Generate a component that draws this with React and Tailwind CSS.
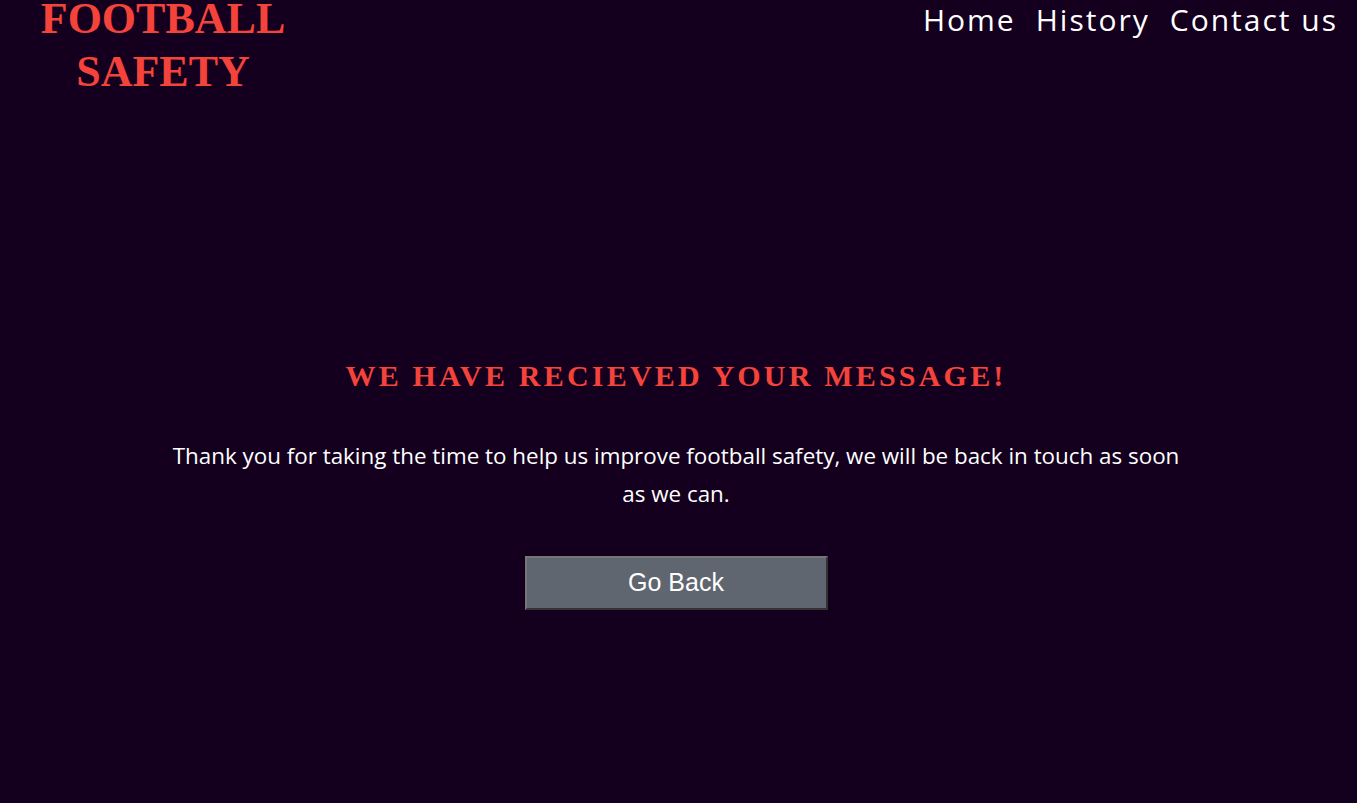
export default function App() {
    const navLinks = ["Home", "History", "Contact us"];

    return (
        <div className="min-h-screen w-full bg-[#14001e] flex flex-col">
            <header className="flex items-start justify-between pl-[40px] pr-[19px]">
                <h1 className="w-[246px] text-center font-['Liberation_Serif',serif] font-bold text-[44px] text-[#f4433b]">
                    <span className="block leading-[38px]">FOOTBALL</span>
                    <span className="block leading-[38px] mt-[15px]">SAFETY</span>
                </h1>
                <nav className="flex gap-[20px]">
                    {navLinks.map((link) => (
                        <a
                            key={link}
                            href="#"
                            className="font-['Open_Sans',sans-serif] text-[30px] leading-[40px] tracking-[2px] text-white"
                        >
                            {link}
                        </a>
                    ))}
                </nav>
            </header>

            <main className="flex flex-col items-center pt-[267px] pr-[5px]">
                <h2 className="font-['Liberation_Serif',serif] font-bold text-[30px] leading-[36px] tracking-[3.2px] text-[#f4433b]">
                    WE HAVE RECIEVED YOUR MESSAGE!
                </h2>
                <p className="mt-[43px] w-[1020px] text-center font-['Open_Sans',sans-serif] text-[22.4px] leading-[38px] text-white">
                    Thank you for taking the time to help us improve football safety, we will be back in touch as soon as we can.
                </p>
                <button
                    type="button"
                    className="mt-[43px] w-[303px] h-[54px] bg-[#5f6670] border-2 border-t-[#767676] border-l-[#767676] border-r-[#333] border-b-[#333] font-['Liberation_Sans',sans-serif] text-[25px] text-white"
                >
                    Go Back
                </button>
            </main>
        </div>
    );
}
